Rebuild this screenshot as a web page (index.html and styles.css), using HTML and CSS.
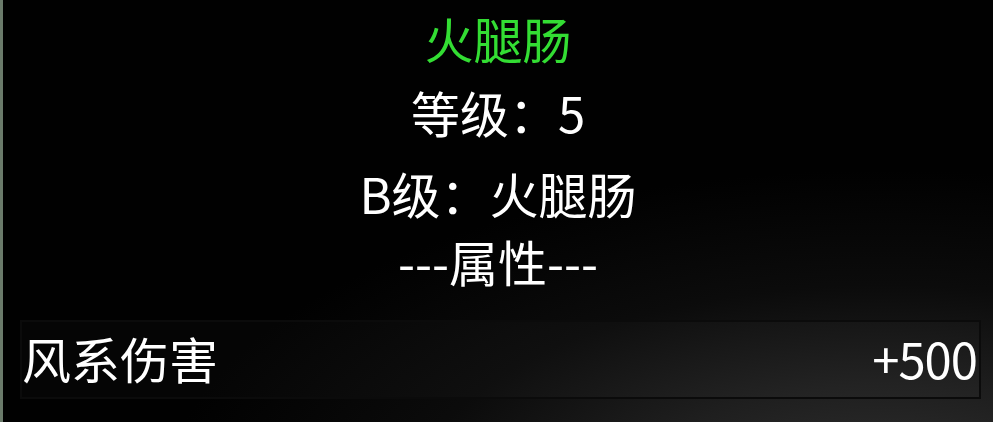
FILE: index.html
```html
<!DOCTYPE html>
<html lang="zh">
<head>
<meta charset="utf-8">
<link rel="stylesheet" href="styles.css">
</head>
<body>
<div class="panel">
  <div class="header">
    <div class="title">火腿肠</div>
    <div class="line level">等级：5</div>
    <div class="line grade">B级：火腿肠</div>
    <div class="line attr">---属性---</div>
  </div>
  <div class="row">
    <span class="name">风系伤害</span>
    <span class="value">+500</span>
  </div>
</div>
</body>
</html>
```

FILE: styles.css
```css
html, body {
  margin: 0;
  padding: 0;
  width: 993px;
  height: 422px;
  overflow: hidden;
  background: #000;
}
.panel {
  box-sizing: border-box;
  width: 993px;
  height: 422px;
  border-left: 3px solid #6b7b6b;
  background:
    radial-gradient(ellipse 720px 330px at 880px 500px, rgba(50,50,50,1), rgba(34,34,34,0.9) 35%, rgba(18,18,18,0.6) 65%, rgba(0,0,0,0) 100%),
    #010101;
  font-family: "Noto Sans CJK SC", "Noto Sans", sans-serif;
  font-weight: 400;
  color: #fff;
  display: flex;
  flex-direction: column;
  padding-left: 17px;
  padding-right: 12px;
}
.header {
  display: flex;
  flex-direction: column;
  align-items: center;
  padding-top: 8px;
  margin-left: -17px;
  margin-right: -12px;
}
.title {
  color: #33dd33;
  font-size: 49px;
  line-height: 60px;
}
.line {
  font-size: 49px;
  line-height: 60px;
}
.level { margin-top: 14px; }
.grade { margin-top: 21px; }
.attr { margin-top: 8px; }
.row {
  margin-top: 29px;
  height: 79px;
  box-sizing: border-box;
  border: 2px solid #0b0b0b;
  background: rgba(255,255,255,0.02);
  display: flex;
  justify-content: space-between;
  align-items: center;
  font-size: 49px;
  line-height: 60px;
  padding: 0 2px 4px 0;
}
.value {
  letter-spacing: -1px;
}
```
